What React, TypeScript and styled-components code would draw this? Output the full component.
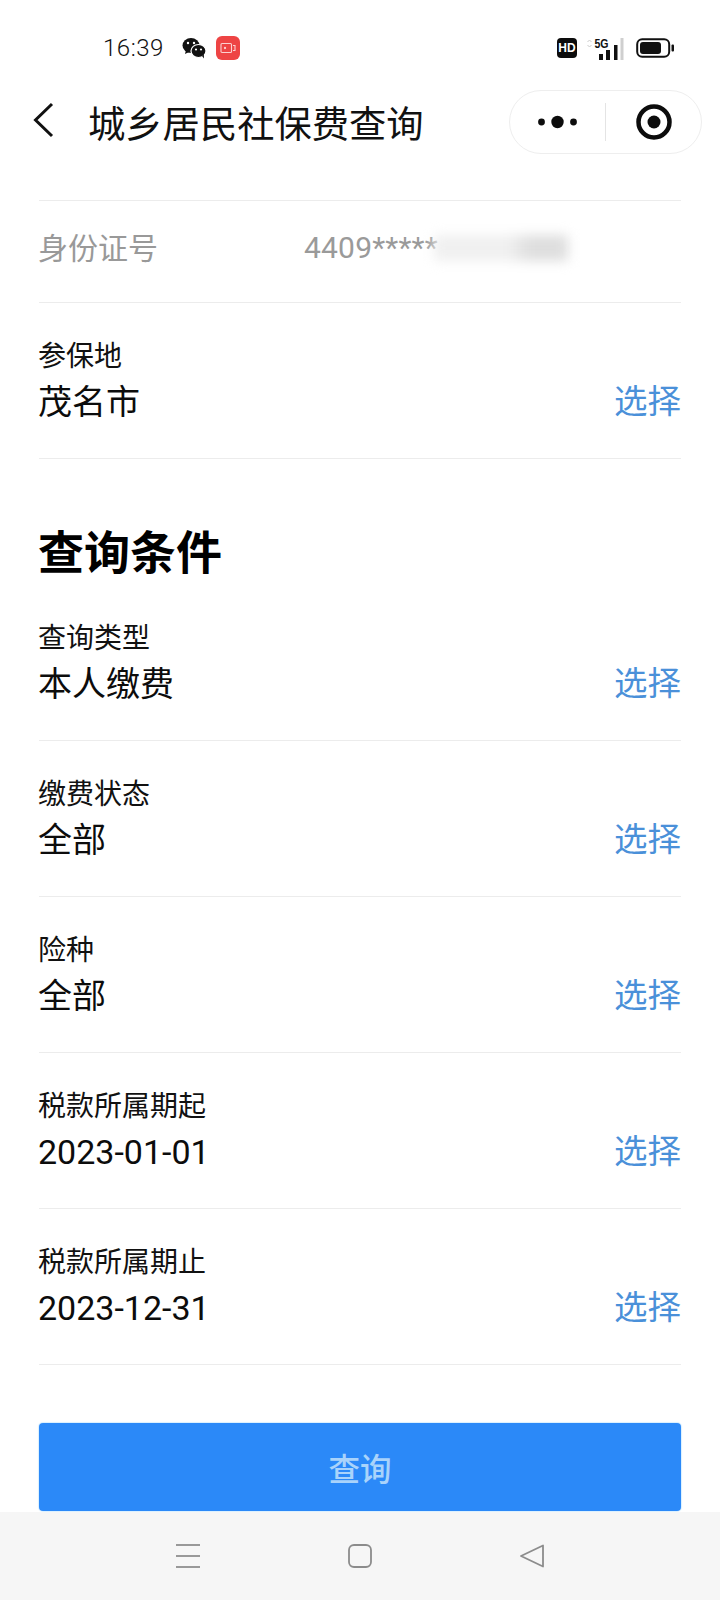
import React from "react";
import styled, { createGlobalStyle } from "styled-components";

const Global = createGlobalStyle`
  html, body { margin: 0; padding: 0; background: #fff; }
  body { font-family: Roboto, "Noto Sans CJK SC", sans-serif; }
`;

const Page = styled.div`
  width: 720px;
  height: 1600px;
  overflow: hidden;
  display: flex;
  flex-direction: column;
  background: #fff;
  color: #000;
`;

const StatusBar = styled.div`
  height: 84px;
  flex: none;
  display: flex;
  align-items: center;
  justify-content: space-between;
  padding: 12px 45px 0 103px;
  box-sizing: border-box;
`;
const StatusLeft = styled.div`
  display: flex;
  align-items: center;
`;
const Time = styled.span`
  font-size: 24px;
  font-weight: 300;
  letter-spacing: 0.5px;
  color: #111;
  width: 79px;
`;
const RecBadge = styled.div`
  width: 24px;
  height: 24px;
  margin-left: 10px;
  border-radius: 6px;
  background: #ee4444;
  display: flex;
  align-items: center;
  justify-content: center;
`;
const StatusRight = styled.div`
  display: flex;
  align-items: center;
`;
const HdBadge = styled.div`
  width: 20px;
  height: 20px;
  border-radius: 4px;
  background: #0c0c0c;
  color: #fff;
  font: 700 12px "Liberation Sans", sans-serif;
  display: flex;
  align-items: center;
  justify-content: center;
  margin-right: 9px;
`;

const NavBar = styled.div`
  height: 78px;
  flex: none;
  display: flex;
  align-items: center;
  padding: 0 18px 0 32px;
  box-sizing: border-box;
`;
const BackButton = styled.div`
  width: 56px;
  display: flex;
  align-items: center;
  margin-bottom: 6px;
`;
const Title = styled.div`
  flex: 1;
  font-size: 37.3px;
  line-height: 48px;
  padding-top: 3px;
  color: #111;
`;
const Capsule = styled.div`
  width: 193px;
  height: 64px;
  margin-bottom: 3px;
  box-sizing: border-box;
  border: 1.5px solid #eeeeee;
  border-radius: 32px;
  display: flex;
  align-items: center;
`;
const CapsuleHalf = styled.div`
  flex: 1;
  display: flex;
  align-items: center;
  justify-content: center;
`;
const CapsuleDivider = styled.div`
  width: 1px;
  height: 38px;
  background: #e4e4e4;
`;

const Content = styled.div`
  flex: 1;
  padding: 38px 39px 0;
  display: flex;
  flex-direction: column;
`;
const IdRow = styled.div`
  height: 103px;
  box-sizing: border-box;
  border-top: 1px solid #ececec;
  border-bottom: 1px solid #ececec;
  display: flex;
  align-items: center;
  color: #999;
  font-size: 30px;
  padding-bottom: 8px;
`;
const IdLabel = styled.span`
  width: 265px;
  flex: none;
  margin: 0 1px 4px -1px;
`;
const IdValue = styled.span`
  font-size: 30px;
  color: #9a9a9a;
  letter-spacing: 0.2px;
`;
const Blurred = styled.span`
  width: 134px;
  height: 26px;
  flex: none;
  margin-left: -4px;
  background: linear-gradient(90deg, #f0f0f0 0 55%, #dedede 72% 100%);
  filter: blur(6px);
`;
const Field = styled.div`
  height: 156px;
  box-sizing: border-box;
  border-bottom: 1px solid #ececec;
  display: flex;
  justify-content: space-between;
  align-items: flex-end;
  padding-bottom: 34px;
`;
const FieldText = styled.div`
  display: flex;
  flex-direction: column;
  gap: 5px;
  margin-left: -1px;
`;
const FieldLabel = styled.div`
  font-size: 28px;
  line-height: 36px;
  color: #111;
`;
const FieldValue = styled.div`
  font-size: 34px;
  line-height: 44px;
  color: #0c0c0c;
`;
const SelectLink = styled.div`
  font-size: 33.5px;
  line-height: 44px;
  color: #4a90d9;
`;
const SectionTitle = styled.div`
  margin: 64px 0 2px -1px;
  height: 60px;
  line-height: 60px;
  font-size: 46px;
  font-weight: 700;
  color: #000;
`;
const QueryButton = styled.div`
  margin-top: 58px;
  height: 88px;
  flex: none;
  border-radius: 4px;
  background: #2b89f8;
  box-shadow: 0 0 1px 1px #d9f0ff;
  color: #a9d3fb;
  font-size: 31.5px;
  font-weight: 500;
  display: flex;
  align-items: center;
  justify-content: center;
`;
const BottomBar = styled.div`
  height: 88px;
  flex: none;
  background: #f6f6f6;
  display: flex;
  align-items: flex-start;
  justify-content: center;
  gap: 148px;
  padding-top: 32px;
  box-sizing: border-box;
  position: relative;
`;

const WeChat = () => (
  <svg width="24" height="22" viewBox="0 0 24 22">
    <ellipse cx="9" cy="8.5" rx="8.5" ry="7.5" fill="#111" />
    <path d="M4 13l-1 4 4-2z" fill="#111" />
    <ellipse cx="16.5" cy="14" rx="7.5" ry="6.5" fill="#111" stroke="#fff" strokeWidth="1.2" />
    <path d="M20 19l2 2.5-.2-4z" fill="#111" />
    <circle cx="6" cy="6" r="1.2" fill="#fff" />
    <circle cx="12" cy="6" r="1.2" fill="#fff" />
    <circle cx="14" cy="12.5" r="1.1" fill="#fff" />
    <circle cx="19" cy="12.5" r="1.1" fill="#fff" />
  </svg>
);
const RecIcon = () => (
  <svg width="16" height="12" viewBox="0 0 16 12" fill="none" stroke="#fbd0d0" strokeWidth="1.1">
    <rect x="1" y="1.5" width="10.5" height="9" rx="1" />
    <path d="M13 3.5h2v5h-2" />
    <circle cx="5" cy="6" r=".6" fill="#fbd0d0" />
  </svg>
);
const Signal = () => (
  <svg width="38" height="24" viewBox="0 0 38 24">
    <text x="8.5" y="12" fontFamily="Liberation Sans" fontWeight="700" fontSize="13" textLength="14" lengthAdjust="spacingAndGlyphs" fill="#111">5G</text>
    <rect x="13" y="18" width="4" height="6" fill="#111" />
    <rect x="20" y="14" width="4" height="10" fill="#111" />
    <rect x="28" y="9" width="3.5" height="15" fill="#111" />
    <rect x="34.5" y="2" width="3" height="22" fill="#cfcfcf" />
    <path d="M1.5 6l2-2 2 2M1.5 9l2 2 2-2" stroke="#ccc" fill="none" strokeWidth="1" />
  </svg>
);
const Battery = () => (
  <svg width="39" height="20" viewBox="0 0 39 20" style={{ marginLeft: 12 }}>
    <rect x="1.2" y="1.2" width="32" height="17.6" rx="5" fill="none" stroke="#111" strokeWidth="2" />
    <rect x="4" y="4" width="21" height="12" rx="3" fill="#111" />
    <rect x="35.5" y="6.5" width="2.5" height="7" rx="1" fill="#111" />
  </svg>
);
const Chevron = () => (
  <svg width="24" height="36" viewBox="0 0 24 36" fill="none" stroke="#111" strokeWidth="3">
    <path d="M20 2L3.5 18 20 34" />
  </svg>
);
const Dots = () => (
  <svg width="39" height="16" viewBox="0 0 39 16" fill="#0c0c0c">
    <circle cx="3.5" cy="8" r="3.4" />
    <circle cx="19.5" cy="8" r="6.2" />
    <circle cx="35.5" cy="8" r="3.4" />
  </svg>
);
const Target = () => (
  <svg width="36" height="36" viewBox="0 0 36 36">
    <circle cx="18" cy="18" r="15.5" fill="none" stroke="#0c0c0c" strokeWidth="4.5" />
    <circle cx="18" cy="18" r="6.5" fill="#0c0c0c" />
  </svg>
);
const MenuIcon = () => (
  <svg width="24" height="24" viewBox="0 0 24 24" stroke="#999" strokeWidth="2">
    <path d="M0 1h24M0 12h24M0 23h24" />
  </svg>
);
const HomeIcon = () => (
  <svg width="24" height="24" viewBox="0 0 24 24" fill="none" stroke="#8c8c8c" strokeWidth="1.8">
    <rect x="1" y="1" width="22" height="22" rx="5" />
  </svg>
);
const BackIcon = () => (
  <svg width="24" height="24" viewBox="0 0 24 24" fill="none" stroke="#8c8c8c" strokeWidth="1.8" strokeLinejoin="round">
    <path d="M23 1.5v21L1 12z" />
  </svg>
);

const topFields = [{ label: "参保地", value: "茂名市" }];
const fields = [
  { label: "查询类型", value: "本人缴费" },
  { label: "缴费状态", value: "全部" },
  { label: "险种", value: "全部" },
  { label: "税款所属期起", value: "2023-01-01" },
  { label: "税款所属期止", value: "2023-12-31" },
];

const FieldRow = ({ label, value }: { label: string; value: string }) => (
  <Field>
    <FieldText>
      <FieldLabel>{label}</FieldLabel>
      <FieldValue>{value}</FieldValue>
    </FieldText>
    <SelectLink>选择</SelectLink>
  </Field>
);

export default function App() {
  return (
    <Page>
      <Global />
      <StatusBar>
        <StatusLeft>
          <Time>16:39</Time>
          <WeChat />
          <RecBadge>
            <RecIcon />
          </RecBadge>
        </StatusLeft>
        <StatusRight>
          <HdBadge>HD</HdBadge>
          <Signal />
          <Battery />
        </StatusRight>
      </StatusBar>
      <NavBar>
        <BackButton>
          <Chevron />
        </BackButton>
        <Title>城乡居民社保费查询</Title>
        <Capsule>
          <CapsuleHalf>
            <Dots />
          </CapsuleHalf>
          <CapsuleDivider />
          <CapsuleHalf>
            <Target />
          </CapsuleHalf>
        </Capsule>
      </NavBar>
      <Content>
        <IdRow>
          <IdLabel>身份证号</IdLabel>
          <IdValue>4409*****</IdValue>
          <Blurred />
        </IdRow>
        {topFields.map((f) => (
          <FieldRow key={f.label} {...f} />
        ))}
        <SectionTitle>查询条件</SectionTitle>
        {fields.map((f) => (
          <FieldRow key={f.label} {...f} />
        ))}
        <QueryButton>查询</QueryButton>
      </Content>
      <BottomBar>
        <MenuIcon />
        <HomeIcon />
        <BackIcon />
      </BottomBar>
    </Page>
  );
}
